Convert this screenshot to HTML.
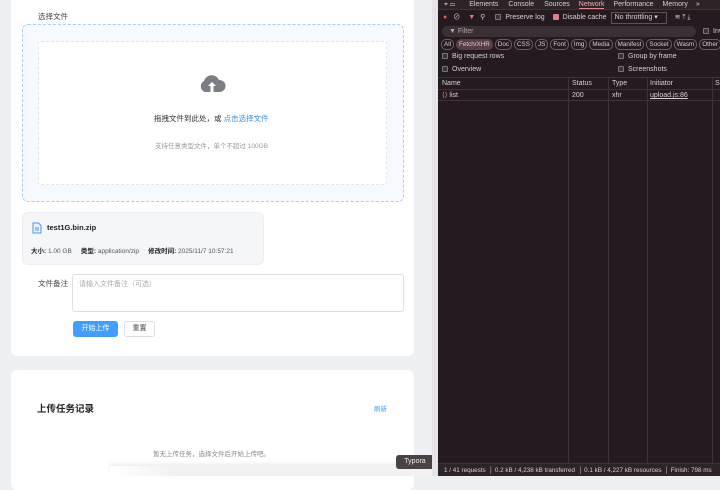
<!DOCTYPE html>
<html><head><meta charset="utf-8"><style>
*{box-sizing:border-box;margin:0;padding:0}
body{width:720px;height:476px;overflow:hidden;position:relative;background:#eef0f4;font-family:"Liberation Sans","Noto Sans CJK SC",sans-serif;}
.abs{position:absolute}
.card{position:absolute;background:#fff;border-radius:6px}
.dt{position:absolute;left:438px;top:0;width:282px;height:476px;background:#231b1f;color:#d8d0d4;font-size:7px;overflow:hidden}
.dt .r{position:absolute;left:0;width:282px}
.chip{display:inline-block;border:1px solid #6b5e63;border-radius:5px;padding:1px 2px;margin-right:2px;font-size:6.3px;line-height:7px}
.cb{display:inline-block;width:6px;height:6px;border:1px solid #777;border-radius:1px;vertical-align:middle;margin-right:4px;background:#3a3035}
.vl{position:absolute;top:77px;bottom:13px;width:1px;background:#3d3438}
</style></head><body>
<div class="card" style="left:11px;top:-6px;width:403px;height:362px"></div>
<div class="abs" style="left:38px;top:11px;font-size:7.5px;color:#444">选择文件</div>
<div class="abs" style="left:22px;top:24px;width:382px;height:178px;border:1px dashed #a9cdf5;border-radius:6px;background:#f6f9fd"></div>
<div class="abs" style="left:38px;top:41px;width:349px;height:144px;border:1px dashed #e4e6ea;border-radius:3px;background:#fff"></div>
<svg class="abs" style="left:198px;top:72px" width="28" height="22" viewBox="0 0 28 22"><path d="M7 20 A6 6 0 0 1 6 9 A8 8 0 0 1 21 8 A6 6 0 0 1 22 20 Z" fill="#7b7e83"/><path d="M14 10 L10 14 H12.5 V20 H15.5 V14 H18 Z" fill="#fff"/></svg>
<div class="abs" style="left:154px;top:113px;font-size:7.5px;color:#333">拖拽文件到此处，或 <span style="color:#3a8ee6">点击选择文件</span></div>
<div class="abs" style="left:155px;top:140px;font-size:6.5px;color:#999">支持任意类型文件，单个不超过 100GB</div>
<div class="abs" style="left:22px;top:212px;width:242px;height:53px;background:#f5f6f8;border:1px solid #eceef1;border-radius:6px"></div>
<svg class="abs" style="left:32px;top:222px" width="10" height="12" viewBox="0 0 10 12"><path d="M1 1H6.5L9 3.5V11H1Z" fill="#e8f1fd" stroke="#4c97ee"/><path d="M3 6H7M3 8H7" stroke="#4c97ee"/></svg>
<div class="abs" style="left:47px;top:223px;font-size:7.5px;color:#222;font-weight:bold">test1G.bin.zip</div>
<div class="abs" style="left:31px;top:245px;font-size:6.5px;color:#555;white-space:nowrap"><b style="color:#222">大小:</b> 1.00 GB &nbsp;&nbsp;&nbsp; <b style="color:#222">类型:</b> application/zip &nbsp;&nbsp;&nbsp; <b style="color:#222">修改时间:</b> 2025/11/7 10:57:21</div>
<div class="abs" style="left:38px;top:278px;font-size:7.5px;color:#444">文件备注</div>
<div class="abs" style="left:72px;top:274px;width:332px;height:38px;border:1px solid #dcdfe6;border-radius:3px;background:#fff;font-size:7px;color:#aaa;padding:4px 6px">请输入文件备注（可选）</div>
<div class="abs" style="left:73px;top:321px;width:45px;height:16px;background:#409eff;border-radius:3px;color:#fff;font-size:7px;text-align:center;line-height:16px">开始上传</div>
<div class="abs" style="left:124px;top:321px;width:31px;height:16px;border:1px solid #dcdfe6;border-radius:3px;background:#fff;color:#444;font-size:7px;text-align:center;line-height:14px">重置</div>
<div class="card" style="left:11px;top:370px;width:403px;height:120px"></div>
<div class="abs" style="left:37px;top:401px;font-size:9.5px;color:#222;font-weight:bold">上传任务记录</div>
<div class="abs" style="left:374px;top:403px;font-size:6.5px;color:#409eff">刷新</div>
<div class="abs" style="left:153px;top:448px;font-size:6.5px;color:#888">暂无上传任务，选择文件后开始上传吧。</div>
<div class="abs" style="left:110px;top:466px;width:322px;height:10px;background:linear-gradient(90deg,rgba(255,255,255,0),#f2f2f3 20%);box-shadow:0 -2px 4px rgba(0,0,0,0.08)"></div>
<div class="abs" style="left:396px;top:455px;width:38px;height:14px;background:#4a4245;border-radius:3px;color:#eee;font-size:7px;text-align:center;line-height:14px">Typora</div>
<div class="dt">
 <div class="r" style="top:0;height:10px;background:#2c2427;border-bottom:1px solid #3d3438;line-height:10px;white-space:nowrap"><span style="margin-left:6px">⌖ ▭</span><span style="margin-left:14px">Elements</span><span style="margin-left:10px">Console</span><span style="margin-left:10px">Sources</span><span style="margin-left:9px;color:#f0b0b8;border-bottom:1px solid #e88">Network</span><span style="margin-left:9px">Performance</span><span style="margin-left:9px">Memory</span><span style="margin-left:8px">»</span></div>
 <div class="r" style="top:11px;height:14px;line-height:14px;white-space:nowrap"><span style="margin-left:5px;color:#e55">●</span><span style="margin-left:6px">⊘</span><span style="margin-left:8px;color:#e77">▼</span><span style="margin-left:5px">⚲</span><span style="margin-left:10px" class="cb"></span>Preserve log<span style="margin-left:8px;background:#e57a8a;border-color:#e57a8a" class="cb"></span>Disable cache<span style="display:inline-block;margin-left:4px;border:1px solid #555;padding:0 3px;line-height:10px;width:56px">No throttling ▾</span><span style="margin-left:8px">≋ ⤒ ⤓</span></div>
 <div class="r" style="top:26px;left:4px;width:254px;height:11px;background:#3a2f34;border-radius:6px;line-height:11px;padding-left:7px;color:#aaa">▼ Filter</div>
 <div class="abs" style="left:265px;top:28px;white-space:nowrap"><span class="cb"></span>Inv</div>
 <div class="r" style="top:39px;left:3px;white-space:nowrap"><span class="chip">All</span><span class="chip" style="background:#5a3d46;border-color:#5a3d46">Fetch/XHR</span><span class="chip">Doc</span><span class="chip">CSS</span><span class="chip">JS</span><span class="chip">Font</span><span class="chip">Img</span><span class="chip">Media</span><span class="chip">Manifest</span><span class="chip">Socket</span><span class="chip">Wasm</span><span class="chip">Other</span></div>
 <div class="abs" style="left:4px;top:53px"><span class="cb"></span>Big request rows</div>
 <div class="abs" style="left:180px;top:53px"><span class="cb"></span>Group by frame</div>
 <div class="abs" style="left:4px;top:66px"><span class="cb"></span>Overview</div>
 <div class="abs" style="left:180px;top:66px"><span class="cb"></span>Screenshots</div>
 <div class="r" style="top:77px;height:13px;border-top:1px solid #3d3438;border-bottom:1px solid #3d3438;line-height:12px"><span class="abs" style="left:4px">Name</span><span class="abs" style="left:134px">Status</span><span class="abs" style="left:174px">Type</span><span class="abs" style="left:212px">Initiator</span><span class="abs" style="left:277px">Si</span></div>
 <div class="r" style="top:90px;height:11px;line-height:11px;border-bottom:1px solid #3d3438"><span class="abs" style="left:4px"><span style="color:#e98">⟨⟩</span> list</span><span class="abs" style="left:134px">200</span><span class="abs" style="left:174px">xhr</span><span class="abs" style="left:212px;text-decoration:underline">upload.js:86</span></div>
 <div class="vl" style="left:130px"></div><div class="vl" style="left:170px"></div><div class="vl" style="left:209px"></div><div class="vl" style="left:274px"></div>
 <div class="r" style="top:463px;height:13px;border-top:1px solid #3d3438;background:#2c2427;line-height:13px;white-space:nowrap;font-size:6.3px;padding-left:6px">1 / 41 requests &nbsp;│ 0.2 kB / 4,238 kB transferred &nbsp;│ 0.1 kB / 4,227 kB resources &nbsp;│ Finish: 798 ms</div>
</div>
<div class="abs" style="left:432px;top:0;width:6px;height:476px;background:#e4e5e8"></div>
</body></html>
